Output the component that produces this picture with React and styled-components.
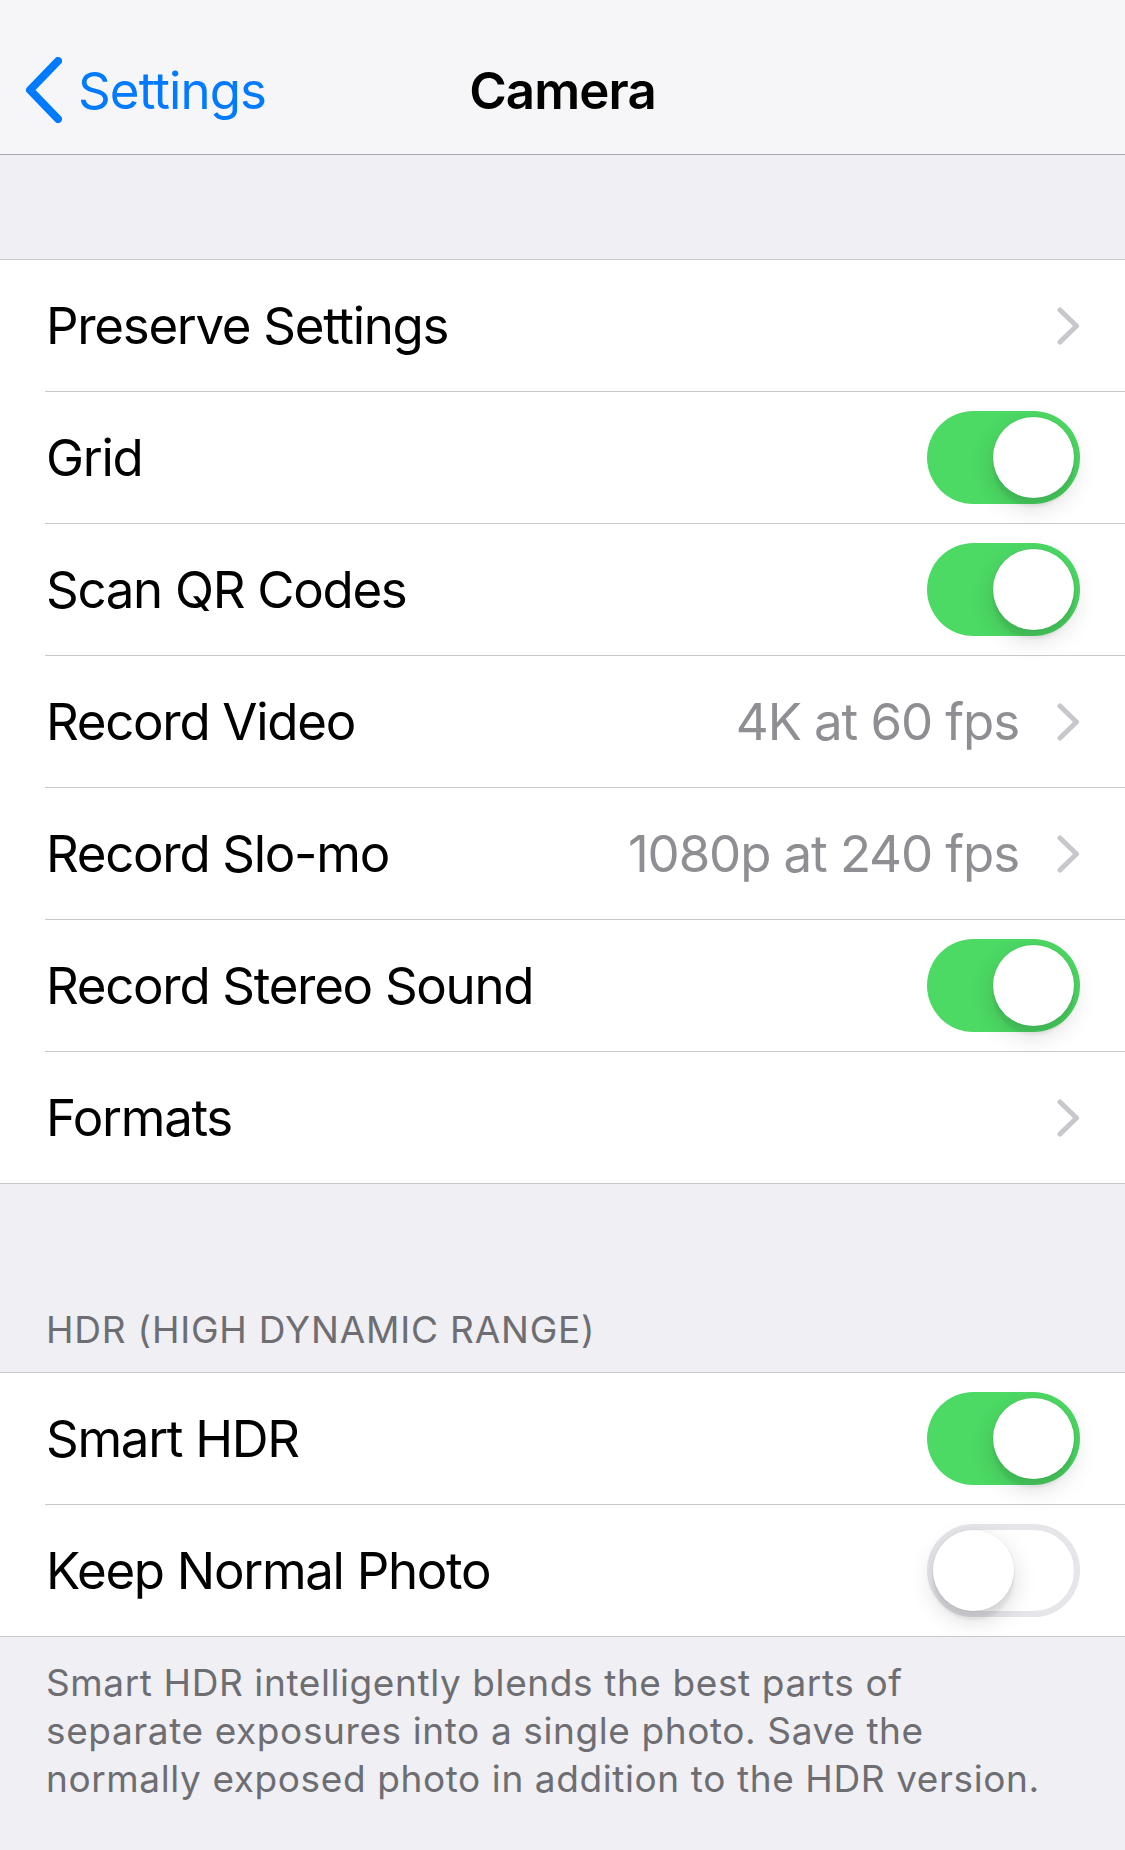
import styled, { createGlobalStyle } from "styled-components";

const GlobalStyle = createGlobalStyle`
  body {
    margin: 0;
    background: #efeff4;
    font-family: Inter, "Noto Sans", "Liberation Sans", sans-serif;
    -webkit-font-smoothing: antialiased;
  }
`;

const Page = styled.div`
  width: 1125px;
  min-height: 1850px;
  background: #efeff4;
`;

const NavBar = styled.header`
  position: relative;
  height: 155px;
  display: flex;
  align-items: flex-start;
  justify-content: center;
  padding-top: 57px;
  box-sizing: border-box;
  background: #f6f6f8;
  border-bottom: 1px solid #a9a9ad;
`;

const BackButton = styled.div`
  position: absolute;
  left: 24px;
  top: 57px;
  display: flex;
  align-items: center;
  gap: 16px;
  color: #007aff;
  font-size: 51px;
  letter-spacing: -0.9px;
`;

const Title = styled.h1`
  margin: 0;
  height: 66px;
  display: flex;
  align-items: center;
  font-size: 51px;
  font-weight: 600;
  letter-spacing: -0.9px;
  color: #000;
`;

const Spacer = styled.div`
  height: ${(p) => p.h}px;
`;

const SectionHeader = styled.div`
  height: ${(p) => p.h}px;
  display: flex;
  align-items: flex-end;
  padding: 0 46px 20px;
  box-sizing: border-box;
  font-size: 37px;
  color: #6d6d72;
  letter-spacing: 0.8px;
`;

const Group = styled.section`
  background: #fff;
  border-top: 1px solid #c8c7cc;
  border-bottom: 1px solid #c8c7cc;
`;

const Row = styled.div`
  height: 131px;
  margin-left: 45px;
  padding-right: 45px;
  display: flex;
  align-items: center;
  border-bottom: ${(p) => (p.last ? "none" : "1px solid #c8c7cc")};
`;

const Label = styled.span`
  flex: 1;
  font-size: 51px;
  letter-spacing: -1.3px;
  color: #000;
  padding-left: 1px;
`;

const Value = styled.span`
  font-size: 51px;
  letter-spacing: -1.1px;
  color: #8e8e93;
  margin-right: 38px;
`;

const Track = styled.div`
  position: relative;
  width: 153px;
  height: 93px;
  box-sizing: border-box;
  border-radius: 47px;
  background: ${(p) => (p.on ? "#4cd964" : "#fff")};
  border: ${(p) => (p.on ? "none" : "6px solid #e5e5ea")};
`;

const Knob = styled.div`
  position: absolute;
  top: ${(p) => (p.on ? 6 : 0)}px;
  left: ${(p) => (p.on ? 66 : 0)}px;
  width: 81px;
  height: 81px;
  border-radius: 50%;
  background: #fff;
  box-shadow: 0 9px 3px rgba(0, 0, 0, 0.06), 0 9px 24px rgba(0, 0, 0, 0.15),
    0 0 0 1px rgba(0, 0, 0, 0.04);
`;

const Footer = styled.p`
  margin: 0;
  padding: 22px 46px 0;
  font-size: 37px;
  line-height: 48px;
  letter-spacing: 0.6px;
  color: #6d6d72;
`;

function Switch({ on }) {
  return (
    <Track on={on ? 1 : 0}>
      <Knob on={on ? 1 : 0} />
    </Track>
  );
}

function Chevron() {
  return (
    <svg width="23" height="38" viewBox="0 0 23 38">
      <path
        d="M3 3 L19.5 19 L3 35"
        fill="none"
        stroke="#c7c7cc"
        strokeWidth="5"
        strokeLinecap="round"
        strokeLinejoin="round"
      />
    </svg>
  );
}

function BackChevron() {
  return (
    <svg width="38" height="66" viewBox="0 0 38 66">
      <path
        d="M34 4 L6 33 L34 62"
        fill="none"
        stroke="#007aff"
        strokeWidth="8"
        strokeLinecap="round"
        strokeLinejoin="round"
      />
    </svg>
  );
}

const mainRows = [
  { label: "Preserve Settings", link: true },
  { label: "Grid", toggle: true },
  { label: "Scan QR Codes", toggle: true },
  { label: "Record Video", value: "4K at 60 fps", link: true },
  { label: "Record Slo-mo", value: "1080p at 240 fps", link: true },
  { label: "Record Stereo Sound", toggle: true },
  { label: "Formats", link: true },
];

const hdrRows = [
  { label: "Smart HDR", toggle: true },
  { label: "Keep Normal Photo", toggle: false },
];

function SettingsRow({ item, last }) {
  return (
    <Row last={last ? 1 : 0}>
      <Label>{item.label}</Label>
      {item.value && <Value>{item.value}</Value>}
      {item.link && <Chevron />}
      {"toggle" in item && <Switch on={item.toggle} />}
    </Row>
  );
}

export default function App() {
  return (
    <Page>
      <GlobalStyle />
      <NavBar>
        <BackButton>
          <BackChevron />
          <span>Settings</span>
        </BackButton>
        <Title>Camera</Title>
      </NavBar>
      <Spacer h={104} />
      <Group>
        {mainRows.map((item, i) => (
          <SettingsRow key={item.label} item={item} last={i === mainRows.length - 1} />
        ))}
      </Group>
      <SectionHeader h={188}>HDR (HIGH DYNAMIC RANGE)</SectionHeader>
      <Group>
        {hdrRows.map((item, i) => (
          <SettingsRow key={item.label} item={item} last={i === hdrRows.length - 1} />
        ))}
      </Group>
      <Footer>
        Smart HDR intelligently blends the best parts of
        <br />
        separate exposures into a single photo. Save the
        <br />
        normally exposed photo in addition to the HDR version.
      </Footer>
    </Page>
  );
}
